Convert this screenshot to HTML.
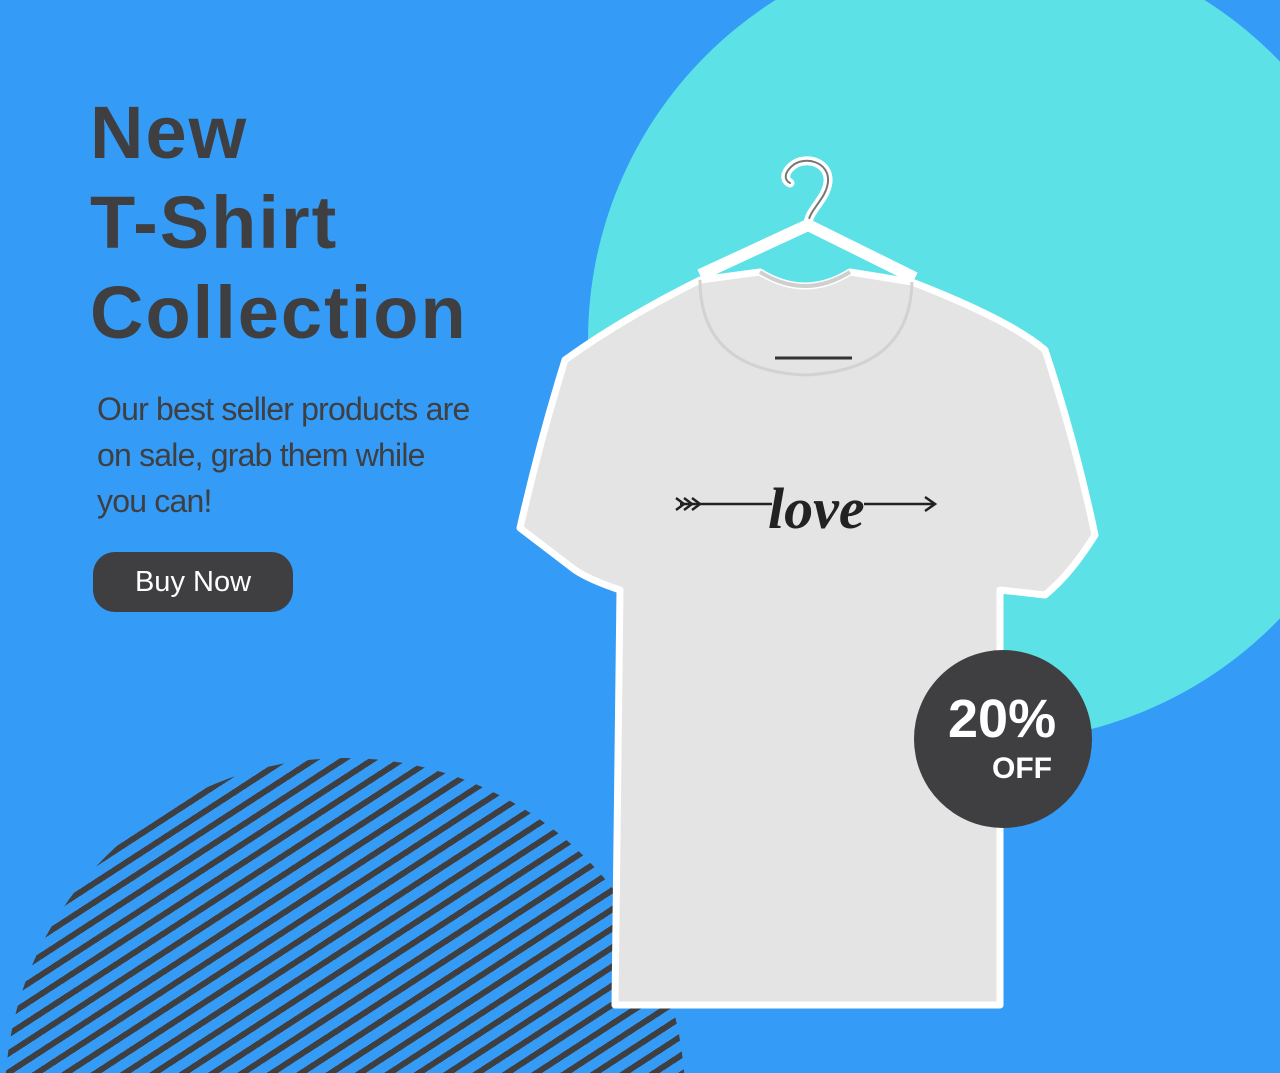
<!DOCTYPE html>
<html style="overflow:hidden;height:1073px"><head><style>
html,body{overflow:hidden}
body{margin:0;width:1280px;height:1073px;overflow:hidden;background:#349bf6;position:relative;font-family:"Liberation Sans",sans-serif}
.cy{position:absolute;left:588px;top:-62px;width:804px;height:804px;border-radius:50%;background:#5ce1e6}
.clip{position:absolute;left:0;top:0;width:1280px;height:1073px;overflow:hidden}
.st{position:absolute;left:5px;top:758px;width:680px;height:680px;border-radius:50%;background:repeating-linear-gradient(-33deg,#3f3f42 0 6px,transparent 6px 16px)}
h1{position:absolute;left:90px;top:88px;margin:0;font-size:74px;line-height:90px;color:#3f3f42;font-weight:bold;letter-spacing:2px}
p{position:absolute;left:97px;top:386px;margin:0;font-size:32px;line-height:46px;color:#3f3f42;width:400px;letter-spacing:-0.8px}
.btn{position:absolute;left:93px;top:552px;width:200px;height:60px;border-radius:22px;background:#3f3f42;color:#fff;font-size:29px;line-height:60px;text-align:center}
.badge{position:absolute;left:914px;top:650px;width:178px;height:178px;border-radius:50%;background:#3f3f42;color:#fff;font-weight:bold}
</style></head><body>
<div class="clip">
<div class="cy"></div>
<div class="st"></div>
<h1>New<br>T-Shirt<br>Collection</h1>
<p>Our best seller products are<br>on sale, grab them while<br>you can!</p>
<div class="btn">Buy Now</div>
<svg style="position:absolute;left:0;top:0" width="1280" height="1073">
<path d="M808 225 C808 210 826 200 828 182 C830 162 805 155 792 166 C784 173 784 180 790 183" fill="none" stroke="#fff" stroke-width="9" stroke-linecap="round"/>
<path d="M808 225 C808 210 826 200 828 182 C830 162 805 155 792 166 C784 173 784 180 790 183" fill="none" stroke="#777" stroke-width="2" stroke-linecap="round"/>
<path d="M700 275 L808 225 L915 278" fill="none" stroke="#fff" stroke-width="12"/>
<path d="M700 280 L760 272 Q805 300 850 272 L912 282 Q1010 320 1045 350 Q1075 440 1095 535 Q1070 575 1045 595 L1000 590 L1000 1005 L615 1005 L620 590 Q590 580 575 570 L520 528 Q540 440 565 360 Q620 320 700 280 Z" fill="#e4e4e4" stroke="#fff" stroke-width="7" stroke-linejoin="round"/>
<path d="M760 272 Q805 300 850 272" fill="none" stroke="#cfcfcf" stroke-width="4"/>
<path d="M700 280 Q700 370 805 375 Q910 370 912 282" fill="none" stroke="#d2d2d2" stroke-width="3"/>
<line x1="775" y1="358" x2="852" y2="358" stroke="#333" stroke-width="3"/>
<line x1="680" y1="504" x2="935" y2="504" stroke="#222" stroke-width="2.5"/>
<path d="M676 498 l8 6 l-8 6 M684 498 l8 6 l-8 6 M692 498 l8 6 l-8 6" fill="none" stroke="#222" stroke-width="2.5"/>
<path d="M925 497 l10 7 l-10 7" fill="none" stroke="#222" stroke-width="2.5"/>
<rect x="772" y="490" width="92" height="30" fill="#e4e4e4"/>
<text x="768" y="528" font-family="Liberation Serif,serif" font-style="italic" font-weight="bold" font-size="58" fill="#222">love</text>
</svg>
<div class="badge"><div style="position:absolute;left:34px;top:38px;font-size:54px">20%</div><div style="position:absolute;left:78px;top:102px;font-size:30px">OFF</div></div>
</div>
</body></html>
